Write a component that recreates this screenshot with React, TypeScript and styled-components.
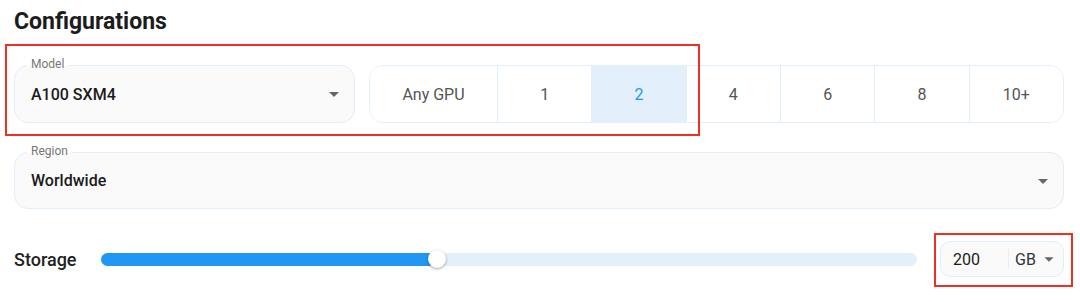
import styled, { createGlobalStyle } from "styled-components";

const GlobalStyle = createGlobalStyle`
  html, body {
    margin: 0;
    padding: 0;
    background: #ffffff;
    font-family: Roboto, "Noto Sans", Arial, sans-serif;
  }
`

const Page = styled.div`
  position: relative;
  width: 1080px;
  height: 302px;
  box-sizing: border-box;
  padding: 8px 16px 0 14px;
  overflow: hidden;
`

const Title = styled.h2`
  margin: 0;
  font-size: 23px;
  line-height: 28px;
  font-weight: 700;
  color: #1c1c1c;
`

const TopRow = styled.div`
  display: grid;
  grid-template-columns: 341px 1fr;
  gap: 14px;
  margin-top: 29px;
`

const Field = styled.div<{ $h: number }>`
  position: relative;
  height: ${p => p.$h}px;
  box-sizing: border-box;
  padding: 0 8px 0 16px;
  border: 1px solid #e2eefa;
  border-radius: 14px;
  background: #fafafa;
  display: flex;
  align-items: center;
  justify-content: space-between;
`

const Legend = styled.span`
  position: absolute;
  top: -9px;
  left: 12px;
  padding: 0 4px;
  font-size: 12px;
  line-height: 14px;
  color: #777;
  background: linear-gradient(to bottom, #fff 0, #fff 9px, #fafafa 9px);
`

const Value = styled.span`
  font-size: 16px;
  font-weight: 500;
  color: #1a1a1a;
`

const Caret = styled.svg`
  width: 24px;
  height: 24px;
  fill: #666;
  flex: none;
`

const Group = styled.div`
  display: grid;
  grid-template-columns: 127px repeat(6, 1fr);
  height: 58px;
  box-sizing: border-box;
  border: 1px solid #e2eefa;
  border-radius: 14px;
  overflow: hidden;
`

const Segment = styled.div<{ $active?: boolean }>`
  display: flex;
  align-items: center;
  justify-content: center;
  font-size: 16px;
  color: ${p => (p.$active ? "#2196f3" : "#555")};
  background: ${p => (p.$active ? "#e3f0fc" : "#fff")};
  &:not(:first-child) {
    border-left: 1px solid #e2eefa;
  }
`

const RegionWrap = styled.div`
  margin-top: 29px;
`

const StorageRow = styled.div`
  display: flex;
  align-items: center;
  gap: 23px;
  margin-top: 32px;
`

const StorageLabel = styled.span`
  font-size: 18px;
  font-weight: 500;
  color: #222;
  width: 64px;
`

const Track = styled.div`
  position: relative;
  flex: 1;
  height: 13px;
  border-radius: 7px;
  background: #e3f0fc;
`

const Fill = styled.div`
  height: 100%;
  border-radius: 7px;
  background: #2196f3;
`

const Thumb = styled.div`
  position: absolute;
  top: 50%;
  width: 18px;
  height: 18px;
  margin: -9px 0 0 -9px;
  border-radius: 50%;
  background: #fff;
  box-shadow: 0 1px 3px rgba(0, 0, 0, 0.35);
`

const SizeBox = styled.div`
  display: flex;
  align-items: center;
  width: 124px;
  height: 36px;
  box-sizing: border-box;
  border: 1px solid #e2eefa;
  border-radius: 10px;
  background: #fafafa;
  padding-left: 12px;
`

const SizeValue = styled.span`
  font-size: 16px;
  color: #1a1a1a;
  width: 55px;
`

const UnitSplit = styled.span`
  width: 1px;
  height: 20px;
  background: #e2eefa;
  margin-right: 6px;
`

const Unit = styled.span`
  display: flex;
  align-items: center;
  font-size: 16px;
  color: #333;
`

const SmallCaret = styled.svg`
  width: 22px;
  height: 22px;
  fill: #666;
  margin-left: 2px;
`

const Highlight = styled.div<{ $x: number; $y: number; $w: number; $h: number }>`
  position: absolute;
  left: ${p => p.$x}px;
  top: ${p => p.$y}px;
  width: ${p => p.$w}px;
  height: ${p => p.$h}px;
  box-sizing: border-box;
  border: 2px solid #ef3124;
  pointer-events: none;
`

const counts = ["Any GPU", "1", "2", "4", "6", "8", "10+"]

function DropArrow() {
  return (
    <Caret viewBox="0 0 24 24">
      <path d="M7 10l5 5 5-5z" />
    </Caret>
  )
}

export default function App() {
  const storage = 41.2
  return (
    <Page>
      <GlobalStyle />
      <Title>Configurations</Title>

      <TopRow>
        <Field $h={58}>
          <Legend>Model</Legend>
          <Value>A100 SXM4</Value>
          <DropArrow />
        </Field>
        <Group>
          {counts.map((c, i) => (
            <Segment key={i} $active={c === "2"}>{c}</Segment>
          ))}
        </Group>
      </TopRow>

      <RegionWrap>
        <Field $h={57}>
          <Legend>Region</Legend>
          <Value>Worldwide</Value>
          <DropArrow />
        </Field>
      </RegionWrap>

      <StorageRow>
        <StorageLabel>Storage</StorageLabel>
        <Track>
          <Fill style={{ width: `${storage}%` }} />
          <Thumb style={{ left: `${storage}%` }} />
        </Track>
        <SizeBox>
          <SizeValue>200</SizeValue>
          <UnitSplit />
          <Unit>
            GB
            <SmallCaret viewBox="0 0 24 24">
              <path d="M7 10l5 5 5-5z" />
            </SmallCaret>
          </Unit>
        </SizeBox>
      </StorageRow>

      <Highlight $x={5} $y={44} $w={695} $h={92} />
      <Highlight $x={934} $y={233} $w={139} $h={54} />
    </Page>
  )
}
